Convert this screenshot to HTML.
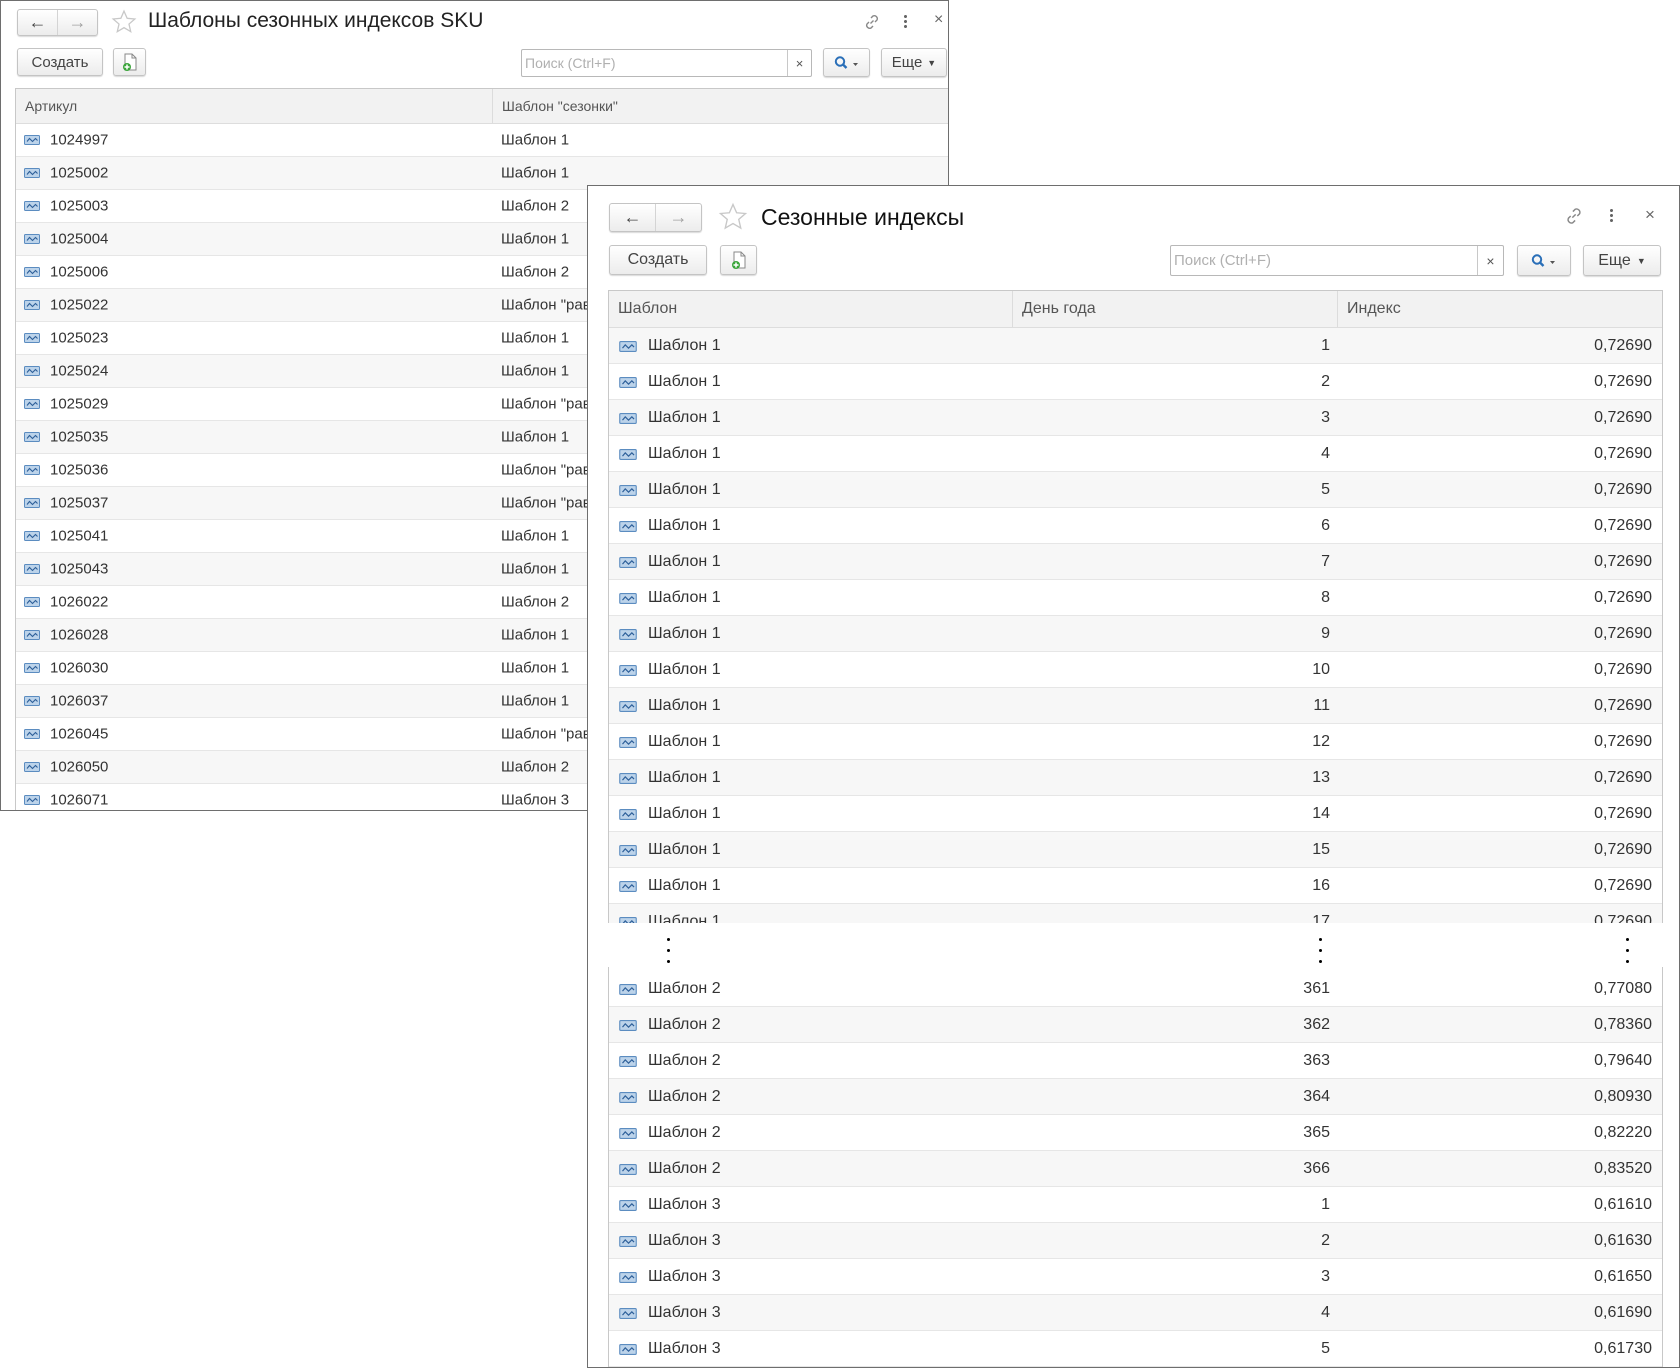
<!DOCTYPE html>
<html><head><meta charset="utf-8">
<style>
*{box-sizing:border-box;margin:0;padding:0}
body{width:1680px;height:1369px;background:#fff;position:relative;overflow:hidden;font-family:"Liberation Sans",Arial,sans-serif;color:#333}
.win{position:absolute;background:#fff;border:1px solid #6e6e6e;overflow:hidden}
.a{position:absolute}
.btn{position:absolute;border:1px solid #c4c4c4;border-radius:3px;background:linear-gradient(#fff,#ececec);box-shadow:0 1px 1px rgba(0,0,0,.15);color:#444;display:flex;align-items:center;justify-content:center}
.nav{position:absolute;border:1px solid #c4c4c4;border-radius:3px;background:linear-gradient(#fff,#ececec);box-shadow:0 1px 1px rgba(0,0,0,.15);display:flex}
.nav div{flex:1;display:flex;align-items:center;justify-content:center;font-size:18px;font-weight:bold;color:#444}
.nav div+div{border-left:1px solid #d4d4d4;color:#a0a0a0}
.srch{position:absolute;border:1px solid #b8b8b8;border-radius:2px;background:#fff;color:#b0b0b0;display:flex;align-items:center}
.srch span.x{position:absolute;right:0;top:0;bottom:0;border-left:1px solid #c8c8c8;display:flex;align-items:center;justify-content:center;color:#555}
.tbl{position:absolute;border:1px solid #c8c8c8;overflow:hidden;background:#fff}
.hd{position:absolute;left:0;right:0;top:0;background:#f2f2f2;border-bottom:1px solid #ddd;color:#555}
.hd div{position:absolute;top:0;bottom:0;display:flex;align-items:center;padding-left:9px;border-right:1px solid #dcdcdc}
.r{position:absolute;left:0;right:0;border-bottom:1px solid #e6e6e6}
.g{background:#f7f7f7}
.r span{position:absolute;top:50%;transform:translateY(-50%);white-space:nowrap}
.r svg{position:absolute;top:50%;margin-top:-5px}
.t1 .r{height:33px;font-size:15px}
.t1 .r svg{left:8px;width:16px;height:10px}
.t1 .c1{left:34px}.t1 .c2{left:485px}
.t2 .r{height:36px;font-size:16px}
.t2 .r svg{left:10px;width:18px;height:11px}
.t2 .c1{left:39px}.t2 .c2{right:332px}.t2 .c3{right:10px}
.dot{position:absolute;width:3px;height:3px;border-radius:50%;background:#000}
</style></head><body>
<svg width="0" height="0" style="position:absolute"><defs><symbol id="i" viewBox="0 0 16 10"><rect x="0.5" y="0.5" width="15" height="9" rx="1" fill="#bcd3ea" stroke="#5b8cc0"/><path d="M3 6.5l2.5-3 3 3 3-3 2 2" fill="none" stroke="#2d5f99" stroke-width="1.1"/></symbol></defs></svg>

<div class="win" style="left:0;top:0;width:949px;height:811px">
  <div class="nav" style="left:16px;top:8px;width:81px;height:27px"><div>&#8592;</div><div>&#8594;</div></div>
  <svg class="a" style="left:110px;top:8px" width="26" height="26" viewBox="0 0 24 24"><path d="M12 2l2.9 6.6 7.1.6-5.4 4.7 1.6 7-6.2-3.7-6.2 3.7 1.6-7L2 9.2l7.1-.6z" fill="none" stroke="#c8c8c8" stroke-width="1.2"/></svg>
  <div class="a" style="left:147px;top:8px;font-size:21px;color:#222">Шаблоны сезонных индексов SKU</div>
  <svg class="a" style="left:862px;top:12px" width="18" height="18" viewBox="0 0 18 18"><path d="M7.5 10.5l3-3M8 5l2-2a3 3 0 014 4l-2 2M10 13l-2 2a3 3 0 01-4-4l2-2" fill="none" stroke="#888" stroke-width="1.4"/></svg>
  <div class="a" style="left:903px;top:13px;width:3px;height:14px;background:radial-gradient(circle,#666 1.4px,transparent 1.6px) 0 0/3px 5px"></div>
  <div class="a" style="left:933px;top:10px;font-size:16px;color:#666">×</div>
  <div class="btn" style="left:16px;top:47px;width:86px;height:28px;font-size:15px">Создать</div>
  <div class="btn" style="left:112px;top:47px;width:33px;height:28px"><svg width="18" height="20" viewBox="0 0 18 20"><path d="M4 2h7l4 4v12H4z" fill="#fff" stroke="#888"/><path d="M11 2v4h4" fill="none" stroke="#888"/><circle cx="6" cy="15" r="4" fill="#3aa53a"/><path d="M6 12.5v5M3.5 15h5" stroke="#fff" stroke-width="1.5"/></svg></div>
  <div class="srch" style="left:520px;top:48px;width:291px;height:28px;font-size:14px;padding-left:3px">Поиск (Ctrl+F)<span class="x" style="width:24px;font-size:13px">×</span></div>
  <div class="btn" style="left:822px;top:47px;width:47px;height:29px"><svg width="28" height="16" viewBox="0 0 28 16"><circle cx="7" cy="6.5" r="4.2" fill="none" stroke="#2a6fb8" stroke-width="2"/><path d="M10 9.5l3.5 3.5" stroke="#2a6fb8" stroke-width="2.4"/><path d="M20 8h5l-2.5 3z" fill="#555"/></svg></div>
  <div class="btn" style="left:880px;top:47px;width:66px;height:29px;font-size:15px">Еще <span style="font-size:9px;margin-left:5px">▼</span></div>
  <div class="tbl t1" style="left:14px;top:87px;width:934px;height:740px">
    <div class="hd" style="height:35px;font-size:14px"><div style="left:0;width:477px">Артикул</div><div style="left:477px;width:460px">Шаблон "сезонки"</div></div>
    <div class="r" style="top:35px"><svg><use href="#i"/></svg><span class="c1">1024997</span><span class="c2">Шаблон 1</span></div>
    <div class="r g" style="top:68px"><svg><use href="#i"/></svg><span class="c1">1025002</span><span class="c2">Шаблон 1</span></div>
    <div class="r" style="top:101px"><svg><use href="#i"/></svg><span class="c1">1025003</span><span class="c2">Шаблон 2</span></div>
    <div class="r g" style="top:134px"><svg><use href="#i"/></svg><span class="c1">1025004</span><span class="c2">Шаблон 1</span></div>
    <div class="r" style="top:167px"><svg><use href="#i"/></svg><span class="c1">1025006</span><span class="c2">Шаблон 2</span></div>
    <div class="r g" style="top:200px"><svg><use href="#i"/></svg><span class="c1">1025022</span><span class="c2">Шаблон "равномерный"</span></div>
    <div class="r" style="top:233px"><svg><use href="#i"/></svg><span class="c1">1025023</span><span class="c2">Шаблон 1</span></div>
    <div class="r g" style="top:266px"><svg><use href="#i"/></svg><span class="c1">1025024</span><span class="c2">Шаблон 1</span></div>
    <div class="r" style="top:299px"><svg><use href="#i"/></svg><span class="c1">1025029</span><span class="c2">Шаблон "равномерный"</span></div>
    <div class="r g" style="top:332px"><svg><use href="#i"/></svg><span class="c1">1025035</span><span class="c2">Шаблон 1</span></div>
    <div class="r" style="top:365px"><svg><use href="#i"/></svg><span class="c1">1025036</span><span class="c2">Шаблон "равномерный"</span></div>
    <div class="r g" style="top:398px"><svg><use href="#i"/></svg><span class="c1">1025037</span><span class="c2">Шаблон "равномерный"</span></div>
    <div class="r" style="top:431px"><svg><use href="#i"/></svg><span class="c1">1025041</span><span class="c2">Шаблон 1</span></div>
    <div class="r g" style="top:464px"><svg><use href="#i"/></svg><span class="c1">1025043</span><span class="c2">Шаблон 1</span></div>
    <div class="r" style="top:497px"><svg><use href="#i"/></svg><span class="c1">1026022</span><span class="c2">Шаблон 2</span></div>
    <div class="r g" style="top:530px"><svg><use href="#i"/></svg><span class="c1">1026028</span><span class="c2">Шаблон 1</span></div>
    <div class="r" style="top:563px"><svg><use href="#i"/></svg><span class="c1">1026030</span><span class="c2">Шаблон 1</span></div>
    <div class="r g" style="top:596px"><svg><use href="#i"/></svg><span class="c1">1026037</span><span class="c2">Шаблон 1</span></div>
    <div class="r" style="top:629px"><svg><use href="#i"/></svg><span class="c1">1026045</span><span class="c2">Шаблон "равномерный"</span></div>
    <div class="r g" style="top:662px"><svg><use href="#i"/></svg><span class="c1">1026050</span><span class="c2">Шаблон 2</span></div>
    <div class="r" style="top:695px"><svg><use href="#i"/></svg><span class="c1">1026071</span><span class="c2">Шаблон 3</span></div>
  </div>
</div>

<div class="win" style="left:587px;top:185px;width:1093px;height:1183px">
  <div class="nav" style="left:21px;top:17px;width:93px;height:29px"><div>&#8592;</div><div>&#8594;</div></div>
  <svg class="a" style="left:130px;top:16px" width="30" height="30" viewBox="0 0 24 24"><path d="M12 2l2.9 6.6 7.1.6-5.4 4.7 1.6 7-6.2-3.7-6.2 3.7 1.6-7L2 9.2l7.1-.6z" fill="none" stroke="#c8c8c8" stroke-width="1.1"/></svg>
  <div class="a" style="left:173px;top:18px;font-size:23px;color:#111">Сезонные индексы</div>
  <svg class="a" style="left:976px;top:20px" width="20" height="20" viewBox="0 0 18 18"><path d="M7.5 10.5l3-3M8 5l2-2a3 3 0 014 4l-2 2M10 13l-2 2a3 3 0 01-4-4l2-2" fill="none" stroke="#888" stroke-width="1.3"/></svg>
  <div class="a" style="left:1022px;top:22px;width:3px;height:15px;background:radial-gradient(circle,#666 1.4px,transparent 1.6px) 0 0/3px 5px"></div>
  <div class="a" style="left:1057px;top:19px;font-size:17px;color:#666">×</div>
  <div class="btn" style="left:21px;top:59px;width:98px;height:30px;font-size:16px">Создать</div>
  <div class="btn" style="left:132px;top:59px;width:37px;height:30px"><svg width="18" height="20" viewBox="0 0 18 20"><path d="M4 2h7l4 4v12H4z" fill="#fff" stroke="#888"/><path d="M11 2v4h4" fill="none" stroke="#888"/><circle cx="6" cy="15" r="4" fill="#3aa53a"/><path d="M6 12.5v5M3.5 15h5" stroke="#fff" stroke-width="1.5"/></svg></div>
  <div class="srch" style="left:582px;top:59px;width:334px;height:31px;font-size:15px;padding-left:3px">Поиск (Ctrl+F)<span class="x" style="width:26px;font-size:14px">×</span></div>
  <div class="btn" style="left:929px;top:59px;width:54px;height:31px"><svg width="30" height="16" viewBox="0 0 28 16"><circle cx="7" cy="6.5" r="4.2" fill="none" stroke="#2a6fb8" stroke-width="2"/><path d="M10 9.5l3.5 3.5" stroke="#2a6fb8" stroke-width="2.4"/><path d="M20 8h5l-2.5 3z" fill="#555"/></svg></div>
  <div class="btn" style="left:995px;top:59px;width:78px;height:31px;font-size:16px">Еще <span style="font-size:9px;margin-left:6px">▼</span></div>
  <div class="tbl t2" style="left:20px;top:104px;width:1055px;height:1090px">
    <div class="hd" style="height:37px;font-size:16px"><div style="left:0;width:404px">Шаблон</div><div style="left:404px;width:325px">День года</div><div style="left:729px;width:330px;border-right:none">Индекс</div></div>
    <div class="r g" style="top:37px"><svg><use href="#i"/></svg><span class="c1">Шаблон 1</span><span class="c2">1</span><span class="c3">0,72690</span></div>
    <div class="r" style="top:73px"><svg><use href="#i"/></svg><span class="c1">Шаблон 1</span><span class="c2">2</span><span class="c3">0,72690</span></div>
    <div class="r g" style="top:109px"><svg><use href="#i"/></svg><span class="c1">Шаблон 1</span><span class="c2">3</span><span class="c3">0,72690</span></div>
    <div class="r" style="top:145px"><svg><use href="#i"/></svg><span class="c1">Шаблон 1</span><span class="c2">4</span><span class="c3">0,72690</span></div>
    <div class="r g" style="top:181px"><svg><use href="#i"/></svg><span class="c1">Шаблон 1</span><span class="c2">5</span><span class="c3">0,72690</span></div>
    <div class="r" style="top:217px"><svg><use href="#i"/></svg><span class="c1">Шаблон 1</span><span class="c2">6</span><span class="c3">0,72690</span></div>
    <div class="r g" style="top:253px"><svg><use href="#i"/></svg><span class="c1">Шаблон 1</span><span class="c2">7</span><span class="c3">0,72690</span></div>
    <div class="r" style="top:289px"><svg><use href="#i"/></svg><span class="c1">Шаблон 1</span><span class="c2">8</span><span class="c3">0,72690</span></div>
    <div class="r g" style="top:325px"><svg><use href="#i"/></svg><span class="c1">Шаблон 1</span><span class="c2">9</span><span class="c3">0,72690</span></div>
    <div class="r" style="top:361px"><svg><use href="#i"/></svg><span class="c1">Шаблон 1</span><span class="c2">10</span><span class="c3">0,72690</span></div>
    <div class="r g" style="top:397px"><svg><use href="#i"/></svg><span class="c1">Шаблон 1</span><span class="c2">11</span><span class="c3">0,72690</span></div>
    <div class="r" style="top:433px"><svg><use href="#i"/></svg><span class="c1">Шаблон 1</span><span class="c2">12</span><span class="c3">0,72690</span></div>
    <div class="r g" style="top:469px"><svg><use href="#i"/></svg><span class="c1">Шаблон 1</span><span class="c2">13</span><span class="c3">0,72690</span></div>
    <div class="r" style="top:505px"><svg><use href="#i"/></svg><span class="c1">Шаблон 1</span><span class="c2">14</span><span class="c3">0,72690</span></div>
    <div class="r g" style="top:541px"><svg><use href="#i"/></svg><span class="c1">Шаблон 1</span><span class="c2">15</span><span class="c3">0,72690</span></div>
    <div class="r" style="top:577px"><svg><use href="#i"/></svg><span class="c1">Шаблон 1</span><span class="c2">16</span><span class="c3">0,72690</span></div>
    <div class="r g" style="top:613px"><svg><use href="#i"/></svg><span class="c1">Шаблон 1</span><span class="c2">17</span><span class="c3">0,72690</span></div>
    <div class="r" style="top:680px"><svg><use href="#i"/></svg><span class="c1">Шаблон 2</span><span class="c2">361</span><span class="c3">0,77080</span></div>
    <div class="r g" style="top:716px"><svg><use href="#i"/></svg><span class="c1">Шаблон 2</span><span class="c2">362</span><span class="c3">0,78360</span></div>
    <div class="r" style="top:752px"><svg><use href="#i"/></svg><span class="c1">Шаблон 2</span><span class="c2">363</span><span class="c3">0,79640</span></div>
    <div class="r g" style="top:788px"><svg><use href="#i"/></svg><span class="c1">Шаблон 2</span><span class="c2">364</span><span class="c3">0,80930</span></div>
    <div class="r" style="top:824px"><svg><use href="#i"/></svg><span class="c1">Шаблон 2</span><span class="c2">365</span><span class="c3">0,82220</span></div>
    <div class="r g" style="top:860px"><svg><use href="#i"/></svg><span class="c1">Шаблон 2</span><span class="c2">366</span><span class="c3">0,83520</span></div>
    <div class="r" style="top:896px"><svg><use href="#i"/></svg><span class="c1">Шаблон 3</span><span class="c2">1</span><span class="c3">0,61610</span></div>
    <div class="r g" style="top:932px"><svg><use href="#i"/></svg><span class="c1">Шаблон 3</span><span class="c2">2</span><span class="c3">0,61630</span></div>
    <div class="r" style="top:968px"><svg><use href="#i"/></svg><span class="c1">Шаблон 3</span><span class="c2">3</span><span class="c3">0,61650</span></div>
    <div class="r g" style="top:1004px"><svg><use href="#i"/></svg><span class="c1">Шаблон 3</span><span class="c2">4</span><span class="c3">0,61690</span></div>
    <div class="r" style="top:1040px"><svg><use href="#i"/></svg><span class="c1">Шаблон 3</span><span class="c2">5</span><span class="c3">0,61730</span></div>
  </div>
  <div class="a" style="left:0;top:737px;width:1093px;height:44px;background:#fff"></div>
  <div class="dot" style="left:79px;top:752px"></div><div class="dot" style="left:79px;top:763px"></div><div class="dot" style="left:79px;top:774px"></div>
  <div class="dot" style="left:731px;top:752px"></div><div class="dot" style="left:731px;top:763px"></div><div class="dot" style="left:731px;top:774px"></div>
  <div class="dot" style="left:1038px;top:752px"></div><div class="dot" style="left:1038px;top:763px"></div><div class="dot" style="left:1038px;top:774px"></div>
</div>
</body></html>
